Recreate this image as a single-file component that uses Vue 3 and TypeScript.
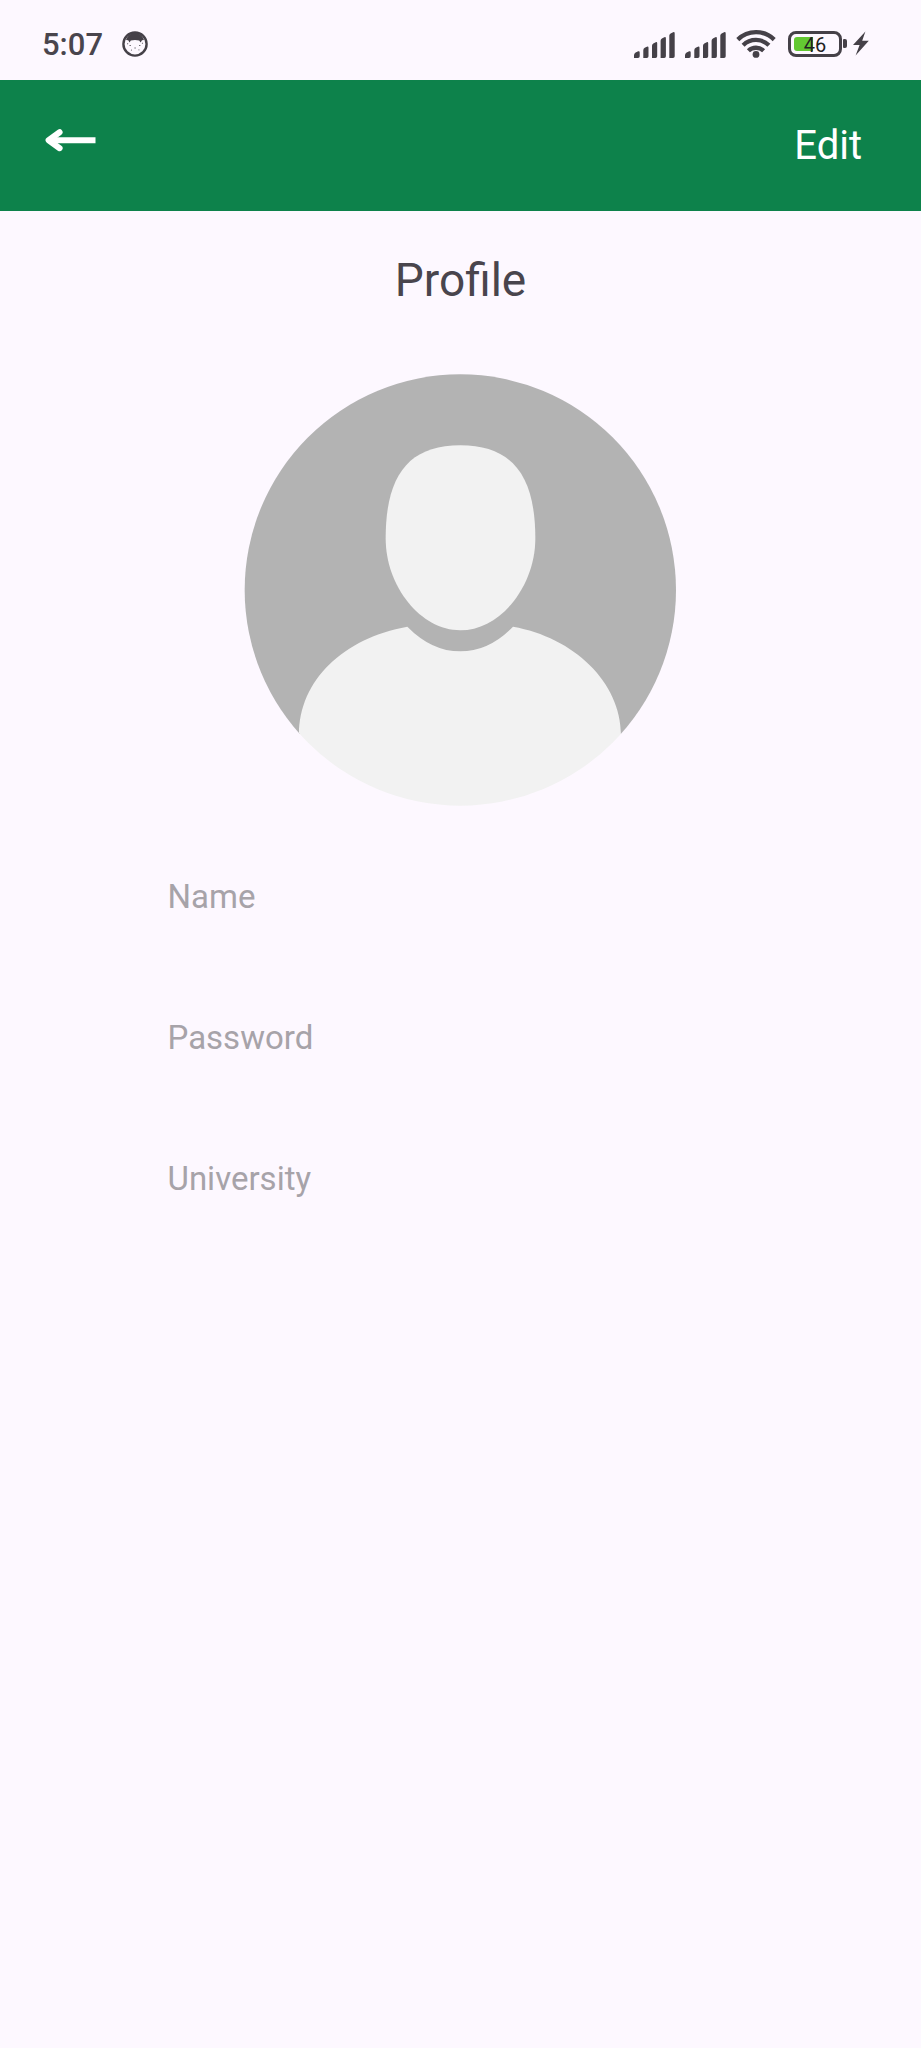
<script setup lang="ts">
interface Field {
  id: string
  label: string
}

const time = '5:07'
const battery = 46
const fields: Field[] = [
  { id: 'name', label: 'Name' },
  { id: 'password', label: 'Password' },
  { id: 'university', label: 'University' },
]
const signals: string[] = ['sim-1', 'sim-2']
</script>

<template>
  <main class="screen">
    <header class="status">
      <span class="time">{{ time }}</span>
      <svg class="face" viewBox="0 0 26 26">
        <circle cx="13" cy="13" r="11.6" fill="none" stroke="#454148" stroke-width="2.4" />
        <path d="M4 9Q7 1.5 13 1.5T22 9L20 9.3 18.6 11.5 17.2 9.4Q13 8.4 8.8 9.4L7.6 11.5 6.2 9.3Z" fill="#454148" />
        <path d="M7.5 14.5h1.4M17 14.5h1.4M12.4 17h1.4M5.2 12.4l.9.5M20 12.4l.9-.5M9 19l.9.3M16.5 19l.9-.3" stroke="#6d6970" stroke-width="1.1" />
      </svg>
      <div class="indicators">
        <svg v-for="id in signals" :key="id" class="signal" viewBox="0 0 42 28">
          <path d="M0 27V24.2Q0 22.6 1.6 21.6L4.2 20.3Q5.7 19.8 5.7 21.4V25.3Q5.7 27 4 27ZM9.3 27V19.2Q9.3 17.7 10.7 16.8L12.9 15.7Q14.5 15.1 14.5 16.8V25.3Q14.5 27 12.8 27ZM18 27V14.7Q18 13.3 19.3 12.4L21.7 11.2Q23.2 10.6 23.2 12.3V25.3Q23.2 27 21.5 27ZM26.6 27V9.8Q26.6 8.4 27.9 7.5L30.3 6.2Q31.9 5.5 31.9 7.4V25.3Q31.9 27 30.2 27ZM35.3 27V4.6Q35.3 3.2 36.6 2.4L39.1 1.2Q40.7.6 40.7 2.4V25.3Q40.7 27 39 27Z" fill="#454148" />
        </svg>
        <svg class="wifi" viewBox="0 0 40 30">
          <g fill="none" stroke="#454148" stroke-width="4.3">
            <path d="M1.8 10.6A26 26 0 0 1 38.2 10.6" />
            <path d="M7.1 16.2A18.5 18.5 0 0 1 32.9 16.2" />
            <path d="M12.4 21.8A11 11 0 0 1 27.6 21.8" />
          </g>
          <circle cx="20" cy="25.4" r="3.4" fill="#454148" />
        </svg>
        <div class="battery">
          <div class="level" :style="{ width: battery + '%' }"></div>
          <span class="percent">{{ battery }}</span>
        </div>
        <div class="cap"></div>
        <svg class="bolt" viewBox="0 0 16 25">
          <path d="M12.4.5L0 14.1H6.6L2.6 24.5 15.8 9.8H9.2Z" fill="#454148" />
        </svg>
      </div>
    </header>

    <nav class="toolbar">
      <svg class="back" viewBox="0 0 52 24">
        <path d="M51.5 12.2H6" />
        <path class="head" d="M15.6 4.2L4.6 12.2 15.6 20.2" />
      </svg>
      <span class="edit">Edit</span>
    </nav>

    <section class="profile">
      <h1 class="title">Profile</h1>
      <svg class="avatar" viewBox="0 0 1380 1380">
        <defs>
          <clipPath id="avatar-clip"><circle cx="691" cy="690" r="647" /></clipPath>
        </defs>
        <g clip-path="url(#avatar-clip)">
          <rect width="1380" height="1122" fill="#b3b3b3" />
          <path d="M691 256C845 256 916 345 916 535C916 680 810 811 691 811S467 680 467 535C467 345 537 256 691 256Z" fill="#f2f2f2" />
          <path d="M207 1125C207 960 340 835 532 800Q605 874 691 874T849 800C1030 832 1173 965 1173 1125V1380H207Z" fill="#f2f2f2" />
        </g>
      </svg>
      <div class="fields">
        <div v-for="field in fields" :key="field.id" class="field">{{ field.label }}</div>
      </div>
    </section>
  </main>
</template>

<style>
body {
  margin: 0;
  background: #fdf8ff;
}
</style>

<style scoped>
.screen {
  width: 921px;
  height: 2048px;
  overflow: hidden;
  background: #fdf8ff;
  font-family: Roboto, sans-serif;
  color: #49454d;
}
.status {
  box-sizing: border-box;
  height: 80px;
  display: flex;
  align-items: center;
  padding: 9px 52px 0 42px;
}
.time {
  font-size: 31px;
  line-height: 36px;
  font-weight: 500;
  width: 80px;
}
.face {
  width: 26px;
  height: 26px;
  margin-top: -2px;
}
.indicators {
  margin-left: auto;
  display: flex;
  align-items: center;
}
.signal {
  width: 42px;
  height: 28px;
  margin-right: 9px;
}
.wifi {
  width: 40px;
  height: 30px;
  margin: -2px 12px 0 0;
}
.battery {
  position: relative;
  box-sizing: border-box;
  width: 54px;
  height: 26px;
  padding: 3px;
  border: 3px solid #454148;
  border-radius: 8px;
  margin-top: -2px;
}
.level {
  height: 100%;
  background: #63c832;
  border-radius: 3px 0 0 3px;
}
.percent {
  position: absolute;
  inset: 0;
  text-align: center;
  font-size: 20px;
  line-height: 22px;
  color: #222;
}
.cap {
  width: 4px;
  height: 9px;
  border-radius: 1px 2px 2px 1px;
  background: #454148;
  margin: -2px 6px 0 1px;
}
.bolt {
  width: 16px;
  height: 25px;
  margin-top: -2px;
}
.toolbar {
  box-sizing: border-box;
  height: 131px;
  display: flex;
  align-items: center;
  justify-content: space-between;
  padding: 0 59px 0 44px;
  background: #0d824b;
  color: #fff;
}
.back {
  width: 52px;
  height: 24px;
  margin-bottom: 12px;
  fill: none;
  stroke: #fff;
  stroke-width: 6;
}
.head {
  stroke-linecap: round;
  stroke-linejoin: round;
}
.edit {
  font-size: 40px;
  line-height: 48px;
}
.profile {
  display: flex;
  flex-direction: column;
  align-items: center;
}
.title {
  margin: 42px 0 0;
  font-size: 46px;
  line-height: 54px;
  font-weight: 400;
}
.avatar {
  width: 460px;
  height: 460px;
  margin: 53px 1px 0 0;
}
.fields {
  width: 586px;
  margin-top: 6px;
}
.field {
  height: 141px;
  line-height: 141px;
  font-size: 33px;
  color: #a7a3a9;
}
</style>
